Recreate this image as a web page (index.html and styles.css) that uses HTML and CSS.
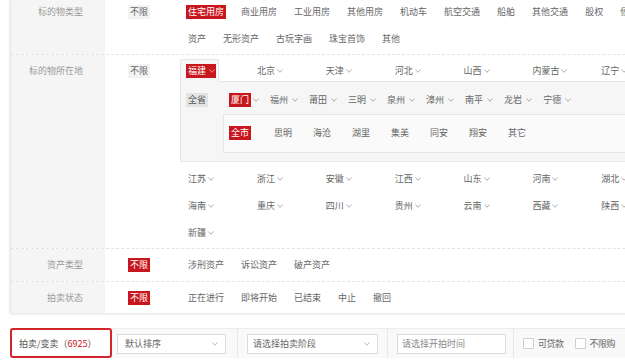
FILE: index.html
```html
<!DOCTYPE html>
<html lang="zh-CN">
<head>
<meta charset="utf-8">
<title>筛选</title>
<link rel="stylesheet" href="styles.css">
</head>
<body>
<div class="filter">
  <div class="row row-first">
    <div class="label">标的物类型</div>
    <div class="limit"><span class="tag plain">不限</span></div>
    <div class="opts">
      <div class="line">
        <span class="tag on">住宅用房</span><span class="tag">商业用房</span><span class="tag">工业用房</span><span class="tag">其他用房</span><span class="tag">机动车</span><span class="tag">航空交通</span><span class="tag">船舶</span><span class="tag">其他交通</span><span class="tag">股权</span><span class="tag">债权</span>
      </div>
      <div class="line">
        <span class="tag">资产</span><span class="tag">无形资产</span><span class="tag">古玩字画</span><span class="tag">珠宝首饰</span><span class="tag">其他</span>
      </div>
    </div>
  </div>

  <div class="row row-loc">
    <div class="label">标的物所在地</div>
    <div class="limit"><span class="tag plain">不限</span></div>
    <div class="region">
      <div class="prov-strip">
        <div class="prov prov-tab"><div class="tab"><span class="tag on tag-arrow">福建<svg class="chev" viewBox="0 0 6 4"><polyline points="0.5,0.5 3,3.3 5.5,0.5"/></svg></span></div></div>
        <div class="prov"><span class="tag">北京</span><svg class="chev" viewBox="0 0 6 4"><polyline points="0.5,0.5 3,3.3 5.5,0.5"/></svg></div>
        <div class="prov"><span class="tag">天津</span><svg class="chev" viewBox="0 0 6 4"><polyline points="0.5,0.5 3,3.3 5.5,0.5"/></svg></div>
        <div class="prov"><span class="tag">河北</span><svg class="chev" viewBox="0 0 6 4"><polyline points="0.5,0.5 3,3.3 5.5,0.5"/></svg></div>
        <div class="prov"><span class="tag">山西</span><svg class="chev" viewBox="0 0 6 4"><polyline points="0.5,0.5 3,3.3 5.5,0.5"/></svg></div>
        <div class="prov"><span class="tag">内蒙古</span><svg class="chev" viewBox="0 0 6 4"><polyline points="0.5,0.5 3,3.3 5.5,0.5"/></svg></div>
        <div class="prov"><span class="tag">辽宁</span><svg class="chev" viewBox="0 0 6 4"><polyline points="0.5,0.5 3,3.3 5.5,0.5"/></svg></div>
      </div>
      <div class="prov-panel">
        <div class="scope"><span class="tag grey">全省</span></div>
        <div class="cities">
          <div class="city-line">
            <div class="city"><span class="tag on">厦门</span><svg class="chev" viewBox="0 0 6 4"><polyline points="0.5,0.5 3,3.3 5.5,0.5"/></svg></div>
            <div class="city"><span class="tag">福州</span><svg class="chev" viewBox="0 0 6 4"><polyline points="0.5,0.5 3,3.3 5.5,0.5"/></svg></div>
            <div class="city"><span class="tag">莆田</span><svg class="chev" viewBox="0 0 6 4"><polyline points="0.5,0.5 3,3.3 5.5,0.5"/></svg></div>
            <div class="city"><span class="tag">三明</span><svg class="chev" viewBox="0 0 6 4"><polyline points="0.5,0.5 3,3.3 5.5,0.5"/></svg></div>
            <div class="city"><span class="tag">泉州</span><svg class="chev" viewBox="0 0 6 4"><polyline points="0.5,0.5 3,3.3 5.5,0.5"/></svg></div>
            <div class="city"><span class="tag">漳州</span><svg class="chev" viewBox="0 0 6 4"><polyline points="0.5,0.5 3,3.3 5.5,0.5"/></svg></div>
            <div class="city"><span class="tag">南平</span><svg class="chev" viewBox="0 0 6 4"><polyline points="0.5,0.5 3,3.3 5.5,0.5"/></svg></div>
            <div class="city"><span class="tag">龙岩</span><svg class="chev" viewBox="0 0 6 4"><polyline points="0.5,0.5 3,3.3 5.5,0.5"/></svg></div>
            <div class="city"><span class="tag">宁德</span><svg class="chev" viewBox="0 0 6 4"><polyline points="0.5,0.5 3,3.3 5.5,0.5"/></svg></div>
          </div>
          <div class="district-box">
            <span class="tag on first">全市</span><span class="tag">思明</span><span class="tag">海沧</span><span class="tag">湖里</span><span class="tag">集美</span><span class="tag">同安</span><span class="tag">翔安</span><span class="tag">其它</span>
          </div>
        </div>
      </div>
      <div class="prov-grid">
        <div class="prov"><span class="tag">江苏</span><svg class="chev" viewBox="0 0 6 4"><polyline points="0.5,0.5 3,3.3 5.5,0.5"/></svg></div>
        <div class="prov"><span class="tag">浙江</span><svg class="chev" viewBox="0 0 6 4"><polyline points="0.5,0.5 3,3.3 5.5,0.5"/></svg></div>
        <div class="prov"><span class="tag">安徽</span><svg class="chev" viewBox="0 0 6 4"><polyline points="0.5,0.5 3,3.3 5.5,0.5"/></svg></div>
        <div class="prov"><span class="tag">江西</span><svg class="chev" viewBox="0 0 6 4"><polyline points="0.5,0.5 3,3.3 5.5,0.5"/></svg></div>
        <div class="prov"><span class="tag">山东</span><svg class="chev" viewBox="0 0 6 4"><polyline points="0.5,0.5 3,3.3 5.5,0.5"/></svg></div>
        <div class="prov"><span class="tag">河南</span><svg class="chev" viewBox="0 0 6 4"><polyline points="0.5,0.5 3,3.3 5.5,0.5"/></svg></div>
        <div class="prov"><span class="tag">湖北</span><svg class="chev" viewBox="0 0 6 4"><polyline points="0.5,0.5 3,3.3 5.5,0.5"/></svg></div>
        <div class="prov"><span class="tag">海南</span><svg class="chev" viewBox="0 0 6 4"><polyline points="0.5,0.5 3,3.3 5.5,0.5"/></svg></div>
        <div class="prov"><span class="tag">重庆</span><svg class="chev" viewBox="0 0 6 4"><polyline points="0.5,0.5 3,3.3 5.5,0.5"/></svg></div>
        <div class="prov"><span class="tag">四川</span><svg class="chev" viewBox="0 0 6 4"><polyline points="0.5,0.5 3,3.3 5.5,0.5"/></svg></div>
        <div class="prov"><span class="tag">贵州</span><svg class="chev" viewBox="0 0 6 4"><polyline points="0.5,0.5 3,3.3 5.5,0.5"/></svg></div>
        <div class="prov"><span class="tag">云南</span><svg class="chev" viewBox="0 0 6 4"><polyline points="0.5,0.5 3,3.3 5.5,0.5"/></svg></div>
        <div class="prov"><span class="tag">西藏</span><svg class="chev" viewBox="0 0 6 4"><polyline points="0.5,0.5 3,3.3 5.5,0.5"/></svg></div>
        <div class="prov"><span class="tag">陕西</span><svg class="chev" viewBox="0 0 6 4"><polyline points="0.5,0.5 3,3.3 5.5,0.5"/></svg></div>
        <div class="prov"><span class="tag">新疆</span><svg class="chev" viewBox="0 0 6 4"><polyline points="0.5,0.5 3,3.3 5.5,0.5"/></svg></div>
      </div>
    </div>
  </div>

  <div class="row">
    <div class="label">资产类型</div>
    <div class="limit"><span class="tag on">不限</span></div>
    <div class="opts">
      <div class="line"><span class="tag">涉刑资产</span><span class="tag">诉讼资产</span><span class="tag">破产资产</span></div>
    </div>
  </div>

  <div class="row row-last">
    <div class="label">拍卖状态</div>
    <div class="limit"><span class="tag on">不限</span></div>
    <div class="opts">
      <div class="line"><span class="tag">正在进行</span><span class="tag">即将开始</span><span class="tag">已结束</span><span class="tag">中止</span><span class="tag">撤回</span></div>
    </div>
  </div>
</div>

<div class="toolbar">
  <div class="count">拍卖/变卖（<span class="num">6925</span>）</div>
  <div class="seg seg-sort">
    <div class="select w-sort"><span>默认排序</span><svg class="chev sel-chev" viewBox="0 0 6 4"><polyline points="0.5,0.5 3,3.3 5.5,0.5"/></svg></div>
  </div>
  <div class="seg seg-stage">
    <div class="select w-stage"><span>请选择拍卖阶段</span><svg class="chev sel-chev" viewBox="0 0 6 4"><polyline points="0.5,0.5 3,3.3 5.5,0.5"/></svg></div>
  </div>
  <div class="seg seg-time">
    <div class="input w-time">请选择开拍时间</div>
  </div>
  <div class="seg seg-check">
    <span class="box"></span><span class="ck-label">可贷款</span>
    <span class="box box-2"></span><span class="ck-label">不限购</span>
  </div>
</div>
</body>
</html>
```

FILE: styles.css
```css
html, body {
  margin: 0;
  padding: 0;
  background: #fff;
  overflow: hidden;
}
body {
  width: 625px;
  height: 364px;
  font-family: "Noto Sans CJK SC", "Noto Sans", sans-serif;
  font-size: 9px;
  color: #666;
}

.filter {
  margin-left: 10px;
  width: 760px;
  border-left: 1px solid #e6e6e6;
  box-shadow: 0 1px 3px rgba(0, 0, 0, 0.12);
  background: #fff;
}

.row {
  display: grid;
  grid-template-columns: 94px 75px 1fr;
  border-bottom: 1px dashed #e3e3e3;
}
.row-last { border-bottom: none; }

.row > .label,
.row > .limit,
.row > .opts {
  padding-top: 9px;
  padding-bottom: 9px;
}
.row-first > .label,
.row-first > .limit,
.row-first > .opts {
  padding-top: 5px;
  padding-bottom: 8px;
}
.row-last > .label,
.row-last > .limit,
.row-last > .opts {
  padding-bottom: 8px;
}

.label {
  background: #f5f5f5;
  color: #999;
  text-align: right;
  padding-right: 22px;
  line-height: 14px;
}
.limit {
  padding-left: 23px;
  line-height: 14px;
}
.opts {
  padding-left: 6px;
  display: flex;
  flex-direction: column;
  gap: 13px;
}
.line {
  display: flex;
  gap: 13px;
  height: 14px;
}

.tag {
  display: inline-block;
  padding: 0 2px;
  height: 14px;
  line-height: 14px;
  white-space: nowrap;
  color: #666;
}
.tag.on {
  background: #c8161d;
  color: #fff;
}
.tag.plain {
  background: #f3f3f3;
  color: #666;
}
.tag.grey {
  background: #e4e4e4;
  color: #555;
}

.chev {
  width: 6px;
  height: 4px;
  fill: none;
  stroke: #999;
  stroke-width: 0.8;
  flex: none;
}

/* region */
.region {
  padding: 4px 0 2px 0;
}
.prov-strip {
  display: flex;
}
.prov {
  width: 68.9px;
  flex: none;
  box-sizing: border-box;
  padding: 5px 0 3px 6px;
  display: flex;
  align-items: center;
  height: 22px;
}
.prov .chev { margin-left: 0; }
.prov-tab {
  padding: 0;
  align-items: flex-start;
}
.tab {
  position: relative;
  z-index: 1;
  background: #f6f6f6;
  border: 1px solid #e6e6e6;
  border-bottom: none;
  padding: 4px 2px 4px 5px;
  margin-bottom: -1px;
  height: 14px;
}
.tag-arrow {
  display: inline-flex;
  align-items: center;
  padding: 0 1px 0 2px;
}
.tag-arrow .chev {
  stroke: #f3b3b3;
  margin-left: 3px;
}

.prov-panel {
  display: flex;
  background: #f6f6f6;
  border-top: 1px solid #e6e6e6;
  border-left: 1px solid #e6e6e6;
  border-bottom: 1px solid #e6e6e6;
  padding: 11px 0 8px 0;
}
.scope {
  width: 42px;
  flex: none;
  box-sizing: border-box;
  padding-left: 5px;
}
.cities {
  flex: 1;
}
.city-line {
  display: flex;
  padding-left: 6px;
  height: 14px;
}
.city {
  display: flex;
  align-items: center;
  margin-right: 9px;
}
.city .chev { margin-left: 2px; }

.district-box {
  margin-top: 7px;
  background: #fafafa;
  border: 1px solid #e6e6e6;
  border-right: none;
  padding: 11px 0 12px 5px;
  display: flex;
  gap: 17px;
  height: 14px;
}
.district-box .first { margin-right: 4px; }

.prov-grid {
  padding-top: 3px;
  display: grid;
  grid-template-columns: repeat(7, 68.9px);
}
.prov-grid .prov {
  height: 27px;
  padding: 0 0 0 6px;
}

/* toolbar */
.toolbar {
  margin-top: 15px;
  margin-left: 10px;
  width: 700px;
  height: 30px;
  display: flex;
  align-items: stretch;
  background: #f9f9f9;
  border-top: 1px solid #ececec;
  box-sizing: border-box;
  font-size: 9px;
}
.count {
  width: 102px;
  box-sizing: border-box;
  border: 2px solid #d4242b;
  border-radius: 3px;
  background: #fff;
  padding-left: 7px;
  margin-top: -1px;
  height: 30px;
  display: flex;
  align-items: center;
  color: #555;
  white-space: nowrap;
}
.count .num { color: #c8161d; }

.seg {
  display: flex;
  align-items: center;
  border-right: 1px solid #e8e8e8;
}
.seg-sort { padding: 0 11px 0 5px; }
.seg-stage { padding: 0 9px 0 9px; }
.seg-time { padding: 0 7px 0 9px; }
.seg-check { padding-left: 9px; border-right: none; }

.select, .input {
  height: 20px;
  box-sizing: border-box;
  border: 1px solid #dcdcdc;
  background: #fff;
  display: flex;
  align-items: center;
  color: #666;
  white-space: nowrap;
}
.w-sort { width: 109px; padding: 0 7px 0 7px; justify-content: space-between; }
.w-stage { width: 131px; padding: 0 7px 0 5px; justify-content: space-between; }
.w-time { width: 109px; padding-left: 4px; color: #888; }
.sel-chev { stroke: #aaa; }

.box {
  width: 11px;
  height: 11px;
  box-sizing: border-box;
  border: 1px solid #cfcfcf;
  background: #fff;
  border-radius: 1px;
  flex: none;
}
.box-2 { margin-left: 11px; }
.ck-label {
  margin-left: 4px;
  color: #666;
  white-space: nowrap;
  letter-spacing: -0.5px;
}
```
